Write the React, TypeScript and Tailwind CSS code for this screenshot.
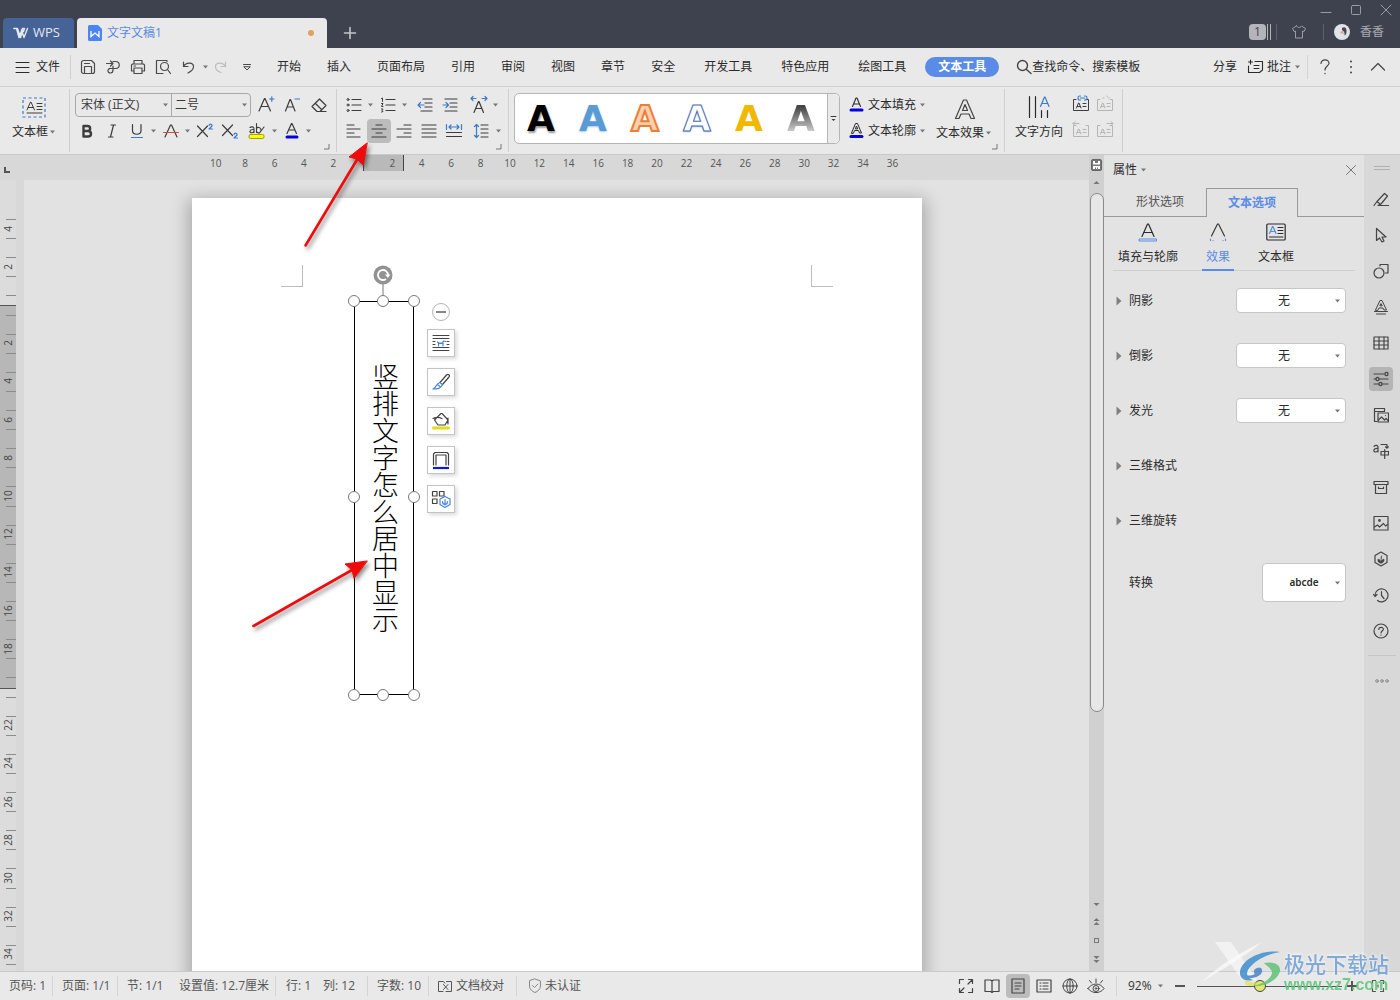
import React from "react";

type P = { children?: React.ReactNode; w?: number; h?: number; className?: string; sw?: number };

/* Line-icon wrapper: one drawing unit equals one pixel. */
function Ic({ children, w = 20, h = 20, className = "", sw = 1.2 }: P) {
  return (
    <svg width={w} height={h} viewBox={`0 0 ${w} ${h}`} fill="none" stroke="currentColor" strokeWidth={sw}
      strokeLinecap="round" strokeLinejoin="round" className={`shrink-0 ${className}`} aria-hidden="true">
      {children}
    </svg>
  );
}

const BLUE = "#3a7bc8";

function Caret({ className = "" }: { className?: string }) {
  return (
    <svg width="9" height="6" viewBox="0 0 9 6" className={`shrink-0 ${className}`} aria-hidden="true">
      <path d="M2 1.5h5L4.5 4.5z" fill="#777" />
    </svg>
  );
}

function Tool({ label, caret, active, className = "w-6", children }: {
  label: string; caret?: boolean; active?: boolean; className?: string; children: React.ReactNode;
}) {
  return (
    <div className="flex items-center">
      <button aria-label={label} className={`flex h-6 items-center justify-center rounded ${active ? "bg-[#bcbcbc]" : ""} ${className}`}>
        {children}
      </button>
      {caret && <Caret />}
    </div>
  );
}

function Corner() {
  return (
    <svg width="6" height="6" viewBox="0 0 6 6" className="absolute right-1.5 bottom-0.5" aria-hidden="true">
      <path d="M5 0v5H0" fill="none" stroke="#777" />
    </svg>
  );
}

function TitleBar() {
  return (
    <header className="flex h-12 shrink-0 justify-between bg-[#3e424f]">
      <div className="flex items-end">
        <button className="ml-[3px] flex h-[30px] w-[71px] items-center gap-1 rounded-t bg-[#466397] pl-2.5 text-[13px] text-[#e4e8f0]">
          <Ic w={16} h={12} sw={1.4}>
            <path d="M.8 1.500h3.700l3 9 2.500-7M3.500 1.500l2.500 9 3.500-9h2l-1 3M8.500 3l2.500 7.500 3.500-9" />
          </Ic>
          WPS
        </button>
        <div className="ml-[3px] flex h-[30px] w-[250px] items-center rounded-t bg-[#e9e9e9] pl-[11px] text-[#5a8ae6]">
          <svg width="14" height="16" viewBox="0 0 14 16" aria-hidden="true">
            <path d="M1.500 0H10l4 4v10.500a1.500 1.500 0 0 1-1.500 1.500h-11A1.500 1.500 0 0 1 0 14.500v-13A1.500 1.500 0 0 1 1.500 0z" fill="#4a85f3" />
            <path d="M3 6v5.500L7 8l4 3.500V6" stroke="#fff" strokeWidth="1.300" fill="none" />
          </svg>
          <span className="ml-[5px]">文字文稿1</span>
          <span className="mr-[13px] ml-auto size-1.5 rounded-full bg-[#e3a15d]" />
        </div>
        <button aria-label="新建标签" className="ml-4 flex h-[30px] items-center text-[#c4c6cc]">
          <Ic w={14} h={14} sw={1.6}><path d="M7 1.5v11M1.5 7h11" /></Ic>
        </button>
      </div>
      <div className="flex flex-col items-end pt-[3px] pr-2 text-[#9a9ca5]">
        <div className="flex h-[13px] gap-[18px]">
          <button aria-label="最小化"><Ic w={12} h={12} sw={1}><path d="M1 8.5h10" /></Ic></button>
          <button aria-label="最大化"><Ic w={12} h={12} sw={1}><rect x="1.5" y="1.5" width="9" height="9" rx="1" /></Ic></button>
          <button aria-label="关闭"><Ic w={12} h={12} sw={1}><path d="M1 1l10 10M11 1L1 11" /></Ic></button>
        </div>
        <div className="mt-2 flex items-center pr-2">
          <span className="flex h-4 w-[17px] items-center justify-center rounded-sm bg-[#b4b5ba] text-[#3e424f]">1</span>
          <svg width="5" height="16" viewBox="0 0 5 16" aria-hidden="true"><path d="M1.500 0v16M4.500 0v16" stroke="#b4b5ba" /></svg>
          <span className="ml-[5px] h-4 w-px bg-[#5d606b]" />
          <button aria-label="皮肤" className="ml-[14px]">
            <Ic w={16} h={16} sw={1}><path d="M5.500 2L1.500 4.500 3 7.500l1.500-.5v7h7V7l1.500.5 1.500-3L10.500 2C9.500 4 6.500 4 5.500 2z" /></Ic>
          </button>
          <span className="ml-4 h-4 w-px bg-[#5d606b]" />
          <svg width="16" height="16" viewBox="0 0 16 16" className="ml-[10px]" aria-hidden="true">
            <circle cx="8" cy="8" r="8" fill="#dfe3ea" />
            <path d="M8 4c2.500-2 5 0 4.500 3.500 0 2-.5 3.500-2 4C11 9 10 7 8 6z" fill="#4b4650" />
            <path d="M6 8.500L8.500 6.500l1.500 4z" fill="#d9a08e" />
          </svg>
          <button className="ml-[10px] leading-4 text-[#a8aab2]">香香</button>
        </div>
      </div>
    </header>
  );
}

const TABS_A = ["开始", "插入", "页面布局", "引用", "审阅", "视图", "章节", "安全"];
const TABS_B = ["开发工具", "特色应用", "绘图工具"];

function MenuBar() {
  return (
    <nav className="flex h-[39px] shrink-0 items-center border-b border-[#d2d2d2] text-[#2b2b2b]">
      <button className="flex items-center gap-1.5 pl-[15px]">
        <Ic w={15} h={12} sw={1}><path d="M1 1.500h13M1 6.500h13M1 11.500h13" /></Ic>文件
      </button>
      <span className="ml-2.5 h-6 w-px bg-[#cfcfcf]" />
      <div className="ml-1 flex items-center text-[#4a4a4a]">
        <Tool label="保存" className="w-[25px]"><Ic w={16} h={16}><path d="M1.500 3.500a2 2 0 0 1 2-2h8l3 3v8a2 2 0 0 1-2 2h-9a2 2 0 0 1-2-2zM4.500 14V7.500h7V14M4.500 4.500h5" /></Ic></Tool>
        <Tool label="输出" className="w-[25px]"><Ic w={16} h={16}><path d="M1.500 4.500h6M5.500 2L8 4.500 5.500 7M8 2.500h2.500c5 0 5 7 0 7H6c-4-.5-4 4.500-.5 4.500 2.500 0 2.500-1.500 2.500-3V7" /></Ic></Tool>
        <Tool label="打印" className="w-[25px]"><Ic w={16} h={16}><path d="M4 5V1.500h8V5M4 12H1.500V6l1-1h11l1 1v6H12M4 9h8v5.500H4zM4 7h1.500" /></Ic></Tool>
        <Tool label="打印预览" className="w-[25px]"><Ic w={16} h={16}><path d="M12 2.500v-1H1.500v13H8" /><circle cx="9.500" cy="7.500" r="4" /><path d="M12.500 10.500l3 4" /></Ic></Tool>
        <Tool label="撤销" caret className="ml-0.5 w-6"><Ic w={14} h={14}><path d="M1.500 2v4.500H6M1.500 6.500c3-5 10-4 10 0 0 3-2.500 5-5.500 6.500" /></Ic></Tool>
        <Tool label="恢复" className="w-5"><Ic w={14} h={14} className="text-[#bdbdbd]"><path d="M12.500 2v4.500H8M12.500 6.500c-3-5-10-4-10 0 0 3 2.500 5 5.500 6" /></Ic></Tool>
        <Tool label="自定义" className="ml-[7px] w-5"><Ic w={10} h={8} sw={1}><path d="M1.500 1.500h7M2 4l3 3 3-3z" /></Ic></Tool>
      </div>
      <div className="ml-5 flex gap-[26px] whitespace-nowrap">
        {TABS_A.map((t) => <button key={t}>{t}</button>)}
      </div>
      <div className="ml-[29px] flex gap-[29px] whitespace-nowrap">
        {TABS_B.map((t) => <button key={t}>{t}</button>)}
      </div>
      <button className="ml-[19px] h-5 rounded-full bg-[#5a8be6] px-[13px] font-bold whitespace-nowrap text-white">文本工具</button>
      <label className="ml-[17px] flex items-center">
        <Ic w={16} h={16} sw={1.4} className="text-[#444]"><circle cx="6.500" cy="6.500" r="5" /><path d="M10.500 10.500l4.500 4" /></Ic>
        <input aria-label="搜索" placeholder="查找命令、搜索模板" className="w-32 bg-transparent outline-none placeholder:text-[#2b2b2b]" />
      </label>
      <div className="ml-auto flex items-center whitespace-nowrap">
        <button>分享</button>
        <button className="ml-2.5 flex items-center gap-[3px]">
          <Ic w={17} h={16} sw={1.1}><path d="M1.500 7v6.500h11l3-2.500V2.500H8M3.500 1v4M1.500 3h4M7 6.500h5M7 9.500h5" /></Ic>批注
        </button>
        <Caret className="ml-0.5" />
        <span className="mr-2 ml-[5px] h-6 w-px bg-[#d4d4d4]" />
        <button aria-label="帮助" className="text-[#444]"><Ic w={18} h={18}><path d="M5 5.500c0-5 8.500-4.500 8 0-.5 2.500-4 3-4 6.500M9 15.300v.4" /></Ic></button>
        <button aria-label="更多" className="ml-2 text-[#444]"><Ic w={18} h={18} sw={2}><path d="M9 3.500v.1M9 9v.1M9 14.500v.1" /></Ic></button>
        <button aria-label="折叠功能区" className="mr-3.5 ml-2.5 text-[#444]"><Ic w={16} h={16}><path d="M1.500 11L8 4.500 14.500 11" /></Ic></button>
      </div>
    </nav>
  );
}

const bars = (ys: [number, number, number][]) => ys.map(([x, x2, y]) => <path key={y} d={`M${x} ${y}H${x2}`} />);

function Ribbon() {
  const sep = "relative flex h-full shrink-0 border-r border-[#d0d0d0]";
  return (
    <section className="flex h-[68px] shrink-0 overflow-hidden border-b border-[#c9c9c9] py-0.5 text-[#3c3c3c]">
      <div className={`${sep} w-[70px] justify-center pt-2`}>
        <button className="flex flex-col items-center gap-[5px]">
          <Ic w={24} h={22}>
            <rect x="1" y="1" width="22" height="19" stroke={BLUE} strokeDasharray="3 2.500" strokeLinecap="butt" />
            <path d="M5 13l3.500-8h.5L12.500 13M6.200 10.500h5M15 6.500h5M15 9.500h5M15 12.500h5M5 16h15" strokeWidth="1" />
          </Ic>
          <span className="flex items-center text-[#2b2b2b]">文本框<Caret /></span>
        </button>
      </div>

      <div className={`${sep} w-[267px] flex-col gap-0.5 pt-1 pl-[5px]`}>
        <div className="flex items-center">
          <div className="mr-px flex h-6 w-44 rounded border border-[#a9a9a9]">
            <label className="relative flex w-24 items-center border-r border-[#a9a9a9]">
              <select aria-label="字体" className="w-full appearance-none bg-transparent pl-[5px] outline-none"><option>宋体 (正文)</option></select>
              <Caret className="absolute right-px" />
            </label>
            <label className="relative flex flex-1 items-center">
              <select aria-label="字号" className="w-full appearance-none bg-transparent pl-[3px] outline-none"><option>二号</option></select>
              <Caret className="absolute right-px" />
            </label>
          </div>
          <Tool label="增大字号" className="w-[27px]"><Ic w={18} h={20}><path d="M2 16L7.500 3.500h.5L13.500 16M4 11.500h7.500" /><path d="M12.500 4h4.500M14.800 1.800v4.500" stroke={BLUE} /></Ic></Tool>
          <Tool label="减小字号" className="w-[27px]"><Ic w={18} h={20}><path d="M1.500 16L6 4.500h.5L11 16M3 12h6.500" /><path d="M11 4h4.500" stroke={BLUE} /></Ic></Tool>
          <Tool label="清除格式" className="w-[26px]"><Ic w={18} h={18}><path d="M2 10.500L9.500 3 16 9.500l-6 6H7zM5.500 7.500l6 6M7 15.500h9" /></Ic></Tool>
        </div>
        <div className="flex items-center gap-px">
          <Tool label="加粗"><Ic w={14} h={14} sw={2.4}><path d="M3.500 2h4c3.500 0 3.500 5 0 5h-4zM3.500 7H8c4 0 4 5.500 0 5.500H3.500z" /></Ic></Tool>
          <Tool label="倾斜"><Ic w={14} h={16}><path d="M6 2h4.500M3.500 14H8M8.500 2L5.500 14" /></Ic></Tool>
          <Tool label="下划线" caret><Ic w={14} h={16}><path d="M2.500 1.500v6c0 5 8.500 5 8.500 0v-6" /><path d="M1.500 14.500h11" stroke={BLUE} /></Ic></Tool>
          <Tool label="删除线" caret><Ic w={18} h={16}><path d="M3 14L8.500 2h1L15 14" /><path d="M1.500 9.500h15" stroke="#d34a4a" /></Ic></Tool>
          <Tool label="上标"><Ic w={18} h={16}><path d="M1.500 3l10 10.500M11.500 3l-10 10.500" /><path d="M13 2.500c.5-2 3.500-1.500 3 .5L13 6h3.500" stroke={BLUE} /></Ic></Tool>
          <Tool label="下标"><Ic w={18} h={16}><path d="M1.500 2l10 10.500M11.500 2l-10 10.500" /><path d="M13 11.500c.5-2 3.500-1.500 3 .5L13 15h3.500" stroke={BLUE} /></Ic></Tool>
          <Tool label="突出显示" caret className="w-[27px]">
            <Ic w={18} h={18}>
              <rect x="1" y="12.500" width="15" height="4" rx="1.500" fill="#ffff00" stroke="#8a8a00" strokeWidth=".8" />
              <path d="M2 5.500c1-1 4-1 4 1v4M6 7.500c-5-.5-5 3.500-2 3.200 1 0 2-.7 2-1.700M8.500 1.500v9M8.500 6.500c1-2 4.500-1 4.500 1.700S9.500 12 8.500 9.500M16 5l-4.500 6" strokeWidth="1.100" />
            </Ic>
          </Tool>
          <Tool label="字体颜色" caret><Ic w={16} h={18}><path d="M3 11.500L7.500 1.500h.5L12.500 11.500M4.500 8h6.500" /><path d="M3 15h10" stroke="#0000e0" strokeWidth="3" /></Ic></Tool>
        </div>
        <Corner />
      </div>

      <div className={`${sep} w-[172px] flex-col gap-0.5 pt-1 pl-[5px]`}>
        <div className="flex items-center gap-px">
          <Tool label="项目符号" caret><Ic w={16} h={16}>{bars([[6, 15, 2.5], [6, 15, 8], [6, 15, 13.5]])}<circle cx="2" cy="2.500" r="1" strokeWidth="1" /><circle cx="2" cy="8" r="1" strokeWidth="1" /><circle cx="2" cy="13.500" r="1" strokeWidth="1" /></Ic></Tool>
          <Tool label="编号" caret><Ic w={16} h={16}>{bars([[6, 15, 2.5], [6, 15, 8], [6, 15, 13.5]])}<path d="M1.500 1.500l1-.5v3.500M1.500 6.500h1.500L1.500 9.500H3M1.500 12H3l-.8 1.500.8 1-1.500.5" strokeWidth="1" /></Ic></Tool>
          <Tool label="减少缩进" className="ml-[3px] w-6"><Ic w={16} h={16}>{bars([[8, 15, 6], [8, 15, 10]])}<path d="M6 2h9M4 14h11" /><path d="M7 8H1M3.500 5.500L1 8l2.500 2.500" stroke={BLUE} /></Ic></Tool>
          <Tool label="增加缩进"><Ic w={16} h={16}>{bars([[8, 15, 6], [8, 15, 10]])}<path d="M3 2h12M3 14h12" /><path d="M1 8h5.500M4 5.500L6.500 8 4 10.500" stroke={BLUE} /></Ic></Tool>
          <Tool label="字符缩放" caret className="ml-1 w-6"><Ic w={18} h={20}><path d="M4 17.500l4.500-11h.5l4.500 11M6 13.500h6" /><path d="M1 3.500h5M3 1.500l-2 2 2 2M17 3.500h-5M15 1.500l2 2-2 2" stroke={BLUE} /></Ic></Tool>
        </div>
        <div className="flex items-center gap-px">
          <Tool label="左对齐"><Ic w={16} h={16}>{bars([[1, 8, 2], [1, 14, 6], [1, 8, 10], [1, 14, 14]])}</Ic></Tool>
          <Tool label="居中对齐" active><Ic w={16} h={16}>{bars([[5, 11, 2], [1, 15, 6], [5, 11, 10], [1, 15, 14]])}</Ic></Tool>
          <Tool label="右对齐"><Ic w={16} h={16}>{bars([[8, 15, 2], [1, 15, 6], [8, 15, 10], [1, 15, 14]])}</Ic></Tool>
          <Tool label="两端对齐"><Ic w={16} h={16}>{bars([[1, 15, 2], [1, 15, 6], [1, 15, 10], [1, 15, 14]])}</Ic></Tool>
          <Tool label="分散对齐"><Ic w={18} h={16}><path d="M1.500 9.500h15M1.500 13.500h15" /><path d="M1.500 1.500v5M16.500 1.500v5M4 4h10M6 2L4 4l2 2M12 2l2 2-2 2" stroke={BLUE} /></Ic></Tool>
          <Tool label="行距" caret className="w-[27px]"><Ic w={16} h={16}>{bars([[8, 15, 2], [8, 15, 6], [8, 15, 10], [8, 15, 14]])}<path d="M3.500 1.500v13M1.500 3.500l2-2 2 2M1.500 12.500l2 2 2-2" stroke={BLUE} /></Ic></Tool>
        </div>
        <Corner />
      </div>

      <div className={`${sep} w-[496px] pt-1 pl-[5px]`}>
        <div className="flex h-[51px] w-[326px] rounded-[5px] border border-[#b5b5b5] bg-white font-['DejaVu_Sans'] text-[36px] leading-[49px] font-bold">
          <button className="w-[52px] text-black [text-shadow:1px_2px_2px_#999]">A</button>
          <button className="w-[52px] text-[#5b9bd5] [text-shadow:0_1px_2px_#a8c8ea]">A</button>
          <button className="w-[52px] text-[#fbd0b0] [-webkit-text-stroke:2px_#ed7d31]">A</button>
          <button className="w-[52px] text-white [-webkit-text-stroke:1px_#4a6cb0] [text-shadow:0_1px_2px_#9db6e0]">A</button>
          <button className="w-[52px] text-[#f2b800]">A</button>
          <button className="w-[52px] bg-linear-to-b from-[#444] from-25% to-[#c8c8c8] to-75% bg-clip-text text-transparent">A</button>
          <button aria-label="更多样式" className="flex flex-1 items-center justify-center rounded-r-[5px] border-l border-[#b5b5b5] bg-[#eaeaea]">
            <Ic w={7} h={8} sw={1}><path d="M1 1.500h5" /><path d="M1.500 4h4l-2 2z" fill="currentColor" stroke="none" /></Ic>
          </button>
        </div>
        <div className="ml-2 flex flex-col gap-0.5 text-[#2b2b2b]">
          <button className="flex h-6 items-center">
            <Ic w={17} h={18}><path d="M4.500 10.500L8 2h1l3.500 8.500M5.500 8h6" strokeWidth="1.100" /><path d="M3 14h11" stroke="#0000e0" strokeWidth="3" /></Ic>
            <span className="ml-[3px]">文本填充</span><Caret className="ml-0.5" />
          </button>
          <button className="flex h-6 items-center">
            <Ic w={17} h={18}><path d="M3.500 11L7.500 1.500h2L13.500 11h-2l-1-2.500h-4L5.500 11zM7.500 6.500l1-2.500 1 2.500z" strokeWidth="1" /><path d="M3 14.500h11" stroke="#0000e0" strokeWidth="3" /></Ic>
            <span className="ml-[3px]">文本轮廓</span><Caret className="ml-0.5" />
          </button>
        </div>
        <button className="ml-[9px] flex flex-col items-center gap-[5px] self-start pt-[5px] text-[#2b2b2b]">
          <Ic w={22} h={22} className="text-[#444]"><path d="M1.500 20.500L9.500 2h3L20.500 20.500h-3.500L15 16H7l-2 4.500zM8.500 12.500L11 6.500l2.500 6z" /></Ic>
          <span className="flex items-center">文本效果<Caret /></span>
        </button>
        <Corner />
      </div>

      <div className={`${sep} w-[118px] pt-1.5 pl-2.5`}>
        <button className="flex flex-col items-center gap-[5px] self-start text-[#2b2b2b]">
          <Ic w={24} h={24}><path d="M2.500 1.500v21M8.500 1.500v21M14.500 15.500v7M20.500 15.500v7" /><path d="M13.500 11.500L17.500 2h.5l4 9.500M15 8.500h6" stroke={BLUE} /></Ic>
          文字方向
        </button>
        <div className="ml-[9px] grid grid-cols-2 content-start gap-x-1.5 gap-y-2">
          {["创建链接", "断开链接", "上一文本框", "下一文本框"].map((t, i) => (
            <button key={t} aria-label={t} className={i ? "text-[#b5b5b5]" : ""}>
              <Ic w={18} h={18}>
                <path d="M4 4.500H1.500v11h15v-11H14M4.500 13l2-5h.5l2 5M5.200 11.500h3M11 8.500h3M11 11.500h3" strokeWidth="1" />
                {i === 0 && <path d="M8.500 1h-1c-2 0-2 4 0 4h1M12.500 1h1c2 0 2 4 0 4h-1M8.500 3h4" stroke={BLUE} />}
                {i === 1 && <path d="M7 3h1M11 1l.5 1M13.500 2.500l-.8.8" strokeWidth="1" />}
                {i === 2 && <path d="M7 2.500H1M3 .5l-2 2 2 2" strokeWidth="1" />}
                {i === 3 && <path d="M11 2.500h6M15 .5l2 2-2 2" strokeWidth="1" />}
              </Ic>
            </button>
          ))}
        </div>
      </div>
    </section>
  );
}

const H_MARKS = ["10", "8", "6", "4", "2", "", "2", "4", "6", "8", "10", "12", "14", "16", "18", "20", "22", "24", "26", "28", "30", "32", "34", "36"];
const V_MARKS = ["4", "2", "", "2", "4", "6", "8", "10", "12", "14", "16", "18", "", "22", "24", "26", "28", "30", "32", "34"];

const FLOATING: [string, React.ReactNode][] = [
  ["布局选项", <><path d="M2 2.500h16M2 5.500h16M2 8.500h2M16 8.500h2M2 11.500h2M16 11.500h2M2 14.500h16M2 17.500h16" strokeWidth="1" /><path d="M6.500 9l1 1h4l1-2 2 .5M7.500 10v3M12 10v3M7.500 10.500h4.500" stroke="#4a86d8" /></>],
  ["形状样式", <><path d="M9 10.500l6.500-7.500c1.500-1.500 4 0 2.500 2L11.500 12.500" /><path d="M9 10.500l2.500 2.200c-2 4-5 4.300-9.500 4.300 3-1 3-5.500 7-6.500zM6.500 12.500l2.500 2" stroke="#4a86d8" /></>],
  ["形状填充", <><path d="M3.500 9L10 2.500h1L17 9l-3 5H7zM2 7.500c4-2 7-1 9 0M17 7v6" /><path d="M2.500 17h15" stroke="#dede1c" strokeWidth="3" /></>],
  ["形状轮廓", <><path d="M2.500 15V4l1.500-1.500h12L17.500 4v11M5 15V5h10v10" /><path d="M2 18h16" stroke="#1414e6" strokeWidth="2.200" strokeLinecap="butt" /></>],
  ["更多设置", <><rect x="1.500" y="2.500" width="4.500" height="4.500" /><rect x="8.500" y="2.500" width="4.500" height="4.500" /><rect x="1.500" y="10" width="4.500" height="4.500" /><path d="M14 7.500l5 2.500v5.500L14 18.500 9 15.500V10z" stroke="#4a86d8" fill="#fff" /><path d="M14 16V10.500M14 15.500c-2 0-2.500-1.500-2.500-3M14 15.500c2 0 2.500-1.500 2.500-3" stroke="#4a86d8" /></>],
];

function Handle({ className }: { className: string }) {
  return <span className={`absolute size-3 rounded-full border border-[#777] bg-white ${className}`} />;
}

function Page() {
  return (
    <div className="relative mx-auto mt-[18px] h-[1032px] w-[730px] bg-white shadow-[0_5px_16px_4px_rgba(0,0,0,0.25)]">
      <span className="absolute top-[67px] left-[89px] size-[22px] border-r border-b border-[#bdbdbd]" />
      <span className="absolute top-[67px] left-[619px] size-[22px] border-b border-l border-[#bdbdbd]" />
      <div className="absolute top-[103px] left-[162px] flex h-[394px] w-[60px] items-center justify-center border border-black">
        <p className="ml-0.5 text-[27px] leading-[27px] font-light text-black [writing-mode:vertical-rl]">竖排文字怎么居中显示</p>
        <Handle className="-top-[7px] -left-[7px]" />
        <Handle className="-top-[7px] left-[22px]" />
        <Handle className="-top-[7px] -right-[7px]" />
        <Handle className="top-[189px] -left-[7px]" />
        <Handle className="top-[189px] -right-[7px]" />
        <Handle className="-bottom-[7px] -left-[7px]" />
        <Handle className="-bottom-[7px] left-[22px]" />
        <Handle className="-right-[7px] -bottom-[7px]" />
        <svg width="20" height="30" viewBox="0 0 20 30" className="absolute -top-[37px] left-[18px]" aria-hidden="true">
          <path d="M10 18v12" stroke="#777" />
          <circle cx="10" cy="10" r="9.500" fill="#929292" />
          <path d="M13 14a5 5 0 1 1 2-4" fill="none" stroke="#fff" strokeWidth="1.800" />
          <path d="M12 9.500h5.500l-2.700 3.500z" fill="#fff" />
        </svg>
      </div>
      <div className="absolute top-[105px] left-[235px] flex flex-col items-center gap-[11px]">
        <button aria-label="收起" className="-mb-[3px] flex size-[18px] items-center justify-center rounded-full border border-[#b5b5b5] bg-white">
          <span className="h-0.5 w-2.5 bg-[#888]" />
        </button>
        {FLOATING.map(([t, d]) => (
          <button key={t} aria-label={t} className="flex size-7 items-center justify-center border border-[#c4c4c4] bg-white text-[#444] shadow-[2px_2px_4px_rgba(0,0,0,0.15)]">
            <Ic>{d}</Ic>
          </button>
        ))}
      </div>
    </div>
  );
}

function Workspace() {
  return (
    <main className="flex min-w-0 flex-1 bg-[#d8d8d8]">
      <div className="flex min-w-0 flex-1 flex-col">
        <div className="relative h-[25px] shrink-0 text-[10px] text-[#555]">
          <svg width="6" height="6" viewBox="0 0 6 6" className="absolute top-3 left-1" aria-hidden="true"><path d="M1 0v5h5" fill="none" stroke="#555" strokeWidth="2" /></svg>
          <span className="absolute top-0 left-[363px] h-4 w-[41px] border-x border-[#444] bg-[#b9b9b9]" />
          <div className="relative ml-[201px] flex w-[706px]">
            {H_MARKS.map((m, i) => <span key={i} className="flex-1 text-center leading-4">{m}</span>)}
          </div>
        </div>
        <div className="flex min-h-0 flex-1">
          <div className="relative w-6 shrink-0 overflow-hidden text-[10px] text-[#444]">
            <span className="absolute inset-y-0 left-0 w-4 bg-[#dcdcdc]" />
            <span className="absolute top-[125px] left-0 h-[384px] w-4 border-y border-[#555] bg-[#b7b7b7]" />
            <div className="relative mt-[39px] flex h-[764px] w-4 flex-col">
              {V_MARKS.map((m, i) => (
                <div key={i} className="relative flex flex-1 flex-col">
                  <div className="flex h-1/2 items-center justify-center">
                    <span className="-rotate-90 leading-4">{m}</span>
                  </div>
                  <span className="absolute top-0 right-0 h-px w-2.5 bg-[#8c8c8c]" />
                  <span className="absolute top-1/2 right-0 h-px w-2.5 bg-[#8c8c8c]" />
                </div>
              ))}
            </div>
          </div>
          <div className="min-w-0 flex-1 overflow-hidden bg-[#e2e2e2]"><Page /></div>
        </div>
      </div>
      <div className="flex w-[15px] shrink-0 flex-col items-center bg-[#d0d0d0] pt-1 text-[#666]">
        <svg width="11" height="12" viewBox="0 0 11 12" aria-hidden="true">
          <rect x=".5" y=".5" width="10" height="11" rx="1.500" fill="#777" stroke="#666" />
          <path d="M2 2h2v2h3V2h2v3.500H2zM2 7h7v3H7V8.500H6V10H5V8.500H4V10H2z" fill="#fff" />
        </svg>
        <svg width="7" height="5" viewBox="0 0 7 5" className="mt-[9px]" aria-hidden="true"><path d="M.5 4h6l-3-3z" fill="#777" /></svg>
        <span className="mt-2 h-[519px] w-3.5 rounded-full border border-[#8a8a8a] bg-[#e7e7e7]" />
        <div className="mt-auto mb-[7px] flex flex-col items-center gap-2.5">
          <svg width="7" height="5" viewBox="0 0 7 5" aria-hidden="true"><path d="M.5 1h6l-3 3z" fill="#777" /></svg>
          <svg width="7" height="9" viewBox="0 0 7 9" aria-hidden="true"><path d="M.5 4h6l-3-3zM.5 8h6l-3-3z" fill="#777" /></svg>
          <svg width="7" height="9" viewBox="0 0 7 9" aria-hidden="true"><rect x="1.500" y="2.500" width="4" height="4" fill="none" stroke="#777" /></svg>
          <svg width="7" height="9" viewBox="0 0 7 9" aria-hidden="true"><path d="M.5 1h6l-3 3zM.5 5h6l-3 3z" fill="#777" /></svg>
        </div>
      </div>
    </main>
  );
}

function Field({ label, select }: { label: string; select?: boolean }) {
  return (
    <div className="flex h-[55px] items-center pr-[18px] pl-3">
      <svg width="6" height="10" viewBox="0 0 6 10" aria-hidden="true"><path d="M.5.5L5.500 5l-5 4.500z" fill="#808080" /></svg>
      <span className="ml-[7px]">{label}</span>
      {select && (
        <label className="relative ml-auto flex h-[25px] w-[110px] items-center rounded border border-[#c6c6c6] bg-white">
          <select aria-label={label} className="w-full appearance-none bg-transparent pr-3.5 [text-align-last:center] outline-none"><option>无</option></select>
          <Caret className="absolute right-[3px]" />
        </label>
      )}
    </div>
  );
}

function Properties() {
  return (
    <aside className="flex w-[260px] shrink-0 flex-col bg-[#e3e3e3] text-[#2b2b2b]">
      <div className="flex h-[33px] shrink-0 items-center justify-between pr-[7px] pb-[3px] pl-[9px]">
        <button className="flex items-center gap-0.5">属性<Caret /></button>
        <button aria-label="关闭面板"><Ic w={12} h={12} sw={1} className="text-[#777]"><path d="M1.500 1.500l9 9M10.500 1.500l-9 9" /></Ic></button>
      </div>
      <div className="flex h-[29px] shrink-0" role="tablist">
        <button role="tab" className="w-[102px] border-b border-[#999] pl-2.5 text-[#555]">形状选项</button>
        <button role="tab" className="w-[92px] border border-b-0 border-[#999] font-bold text-[#5a8be6]">文本选项</button>
        <span className="flex-1 border-b border-[#999]" />
      </div>
      <div className="relative mx-[9px] flex h-[54px] shrink-0 border-b border-[#cfcfcf] pt-1">
        <button className="flex w-[70px] flex-col items-center gap-1.5">
          <Ic w={20} h={22}><path d="M4 15.500L9.500 3h1L16 15.500M5.500 11.500h9" /><path d="M1.500 18h17v2h-17z" stroke="#5a8be6" strokeWidth="1" /></Ic>填充与轮廓
        </button>
        <button className="-mb-px ml-[19px] flex w-8 flex-col items-center gap-1.5 border-b-2 border-[#5a8be6] text-[#5a8be6]">
          <Ic w={20} h={22}><path d="M3.500 15L9.500 3h1L16.500 15" stroke="#3c3c3c" /><path d="M2.500 18v1.500M5 19.500v.1M15 19.500v.1M17.500 18v1.500" /></Ic>效果
        </button>
        <button className="ml-6 flex w-9 flex-col items-center gap-1.5 whitespace-nowrap">
          <Ic w={20} h={22}><rect x=".8" y="3" width="18.400" height="16" rx="1" /><path d="M12 6.500h5M12 9.500h5M12 12.500h5M3.500 16h13.500" strokeWidth="1" /><path d="M3.500 12.500L6.500 5.500h.5l3 7M4.500 10.500h4.500" stroke="#5a8be6" /></Ic>文本框
        </button>
      </div>
      <div className="mt-0.5">
        <Field label="阴影" select />
        <Field label="倒影" select />
        <Field label="发光" select />
        <Field label="三维格式" />
        <Field label="三维旋转" />
      </div>
      <div className="mt-[15px] flex items-center justify-between pr-[18px] pl-[25px]">
        <span>转换</span>
        <button className="relative flex h-[39px] w-[84px] items-center justify-center rounded border border-[#c6c6c6] bg-white font-['Noto_Sans'] text-[10px] font-semibold">
          abcde<Caret className="absolute right-[3px]" />
        </button>
      </div>
    </aside>
  );
}

const SIDE: [string, React.ReactNode][] = [
  ["批注笔", <><path d="M1 14.500l3-4L11.500 2.500l3 2.500L8 13l-3 1.500H15.500M4 10.500L7.500 13.500" /></>],
  ["选择", <><path d="M3.500 1.500v12l3-2.500 2.500 4 2-1-2-4h4z" /></>],
  ["形状", <><circle cx="6" cy="10" r="5" /><path d="M7 3V1.500h8V10h-2.500" /></>],
  ["艺术字", <><path d="M2.500 11L7 1.500h2L13.500 11h-2.500l-1-2H6l-1 2zM7 6.500l1-2 1 2zM1.500 12.500h13M3.500 15h9" strokeWidth="1" /></>],
  ["表格", <><rect x="1" y="2" width="14" height="12" /><path d="M1 6h14M1 10h14M6 2v12M11 2v12" /></>],
  ["属性", <><path d="M1 3h10M1 8h2M6 8h9M1 13h5M9 13h6" /><circle cx="13.500" cy="3" r="1.600" /><circle cx="4.500" cy="8" r="1.600" /><circle cx="7.500" cy="13" r="1.600" /></>],
  ["图库", <><path d="M4 14.500H1.500v-13h10V4M1.500 4.500h10" /><rect x="5" y="6" width="10.500" height="9" /><path d="M5.500 13l3-3 3 3 1.500-1.500 2 2M12.500 8.500v.1" /></>],
  ["翻译", <><path d="M1 3.500c1-1.500 4-1.500 4 .5v5M5 5.500c-5-.5-5 3.500-2.500 3.500C4 9 5 8 5 7M8 1.500h6V5M12.500 3.800L14 5.200l1.300-1.400M8 8.500h7.500V12H8zM11.700 6.500v9" /></>],
  ["素材库", <><path d="M1 2.500h14v3H1zM2.500 5.500v9h11v-9M5.500 8v1.500h5V8" /></>],
  ["图片", <><rect x="1" y="1.500" width="14" height="13.500" /><path d="M1.500 12l3-2 2 2 4-3.500 2 2.500 2-1.500" /><circle cx="6.500" cy="5.500" r=".8" /></>],
  ["推荐", <><path d="M8 1l6 3.500v7L8 15l-6-3.500v-7z" /><path d="M8 12V6.500c0-1.500 1-2 1-2M8 12c-3 0-3.500-2-3-4 2 .5 3 2 3 4 2.500 0 3.500-2 3-4-2 .5-3 2-3 4z" fill="currentColor" strokeWidth=".5" /></>],
  ["历史", <><path d="M2 8.500a6.500 6.500 0 1 1 2.500 5M.5 7.500L2 9.500l2-2M8.500 4.500v4l2.500 3" /></>],
  ["帮助中心", <><circle cx="8" cy="8" r="7" /><path d="M5.800 6.500c0-3 4.800-2.800 4.500 0-.3 1.500-2.300 1.800-2.300 3.500M8 12v.2" /></>],
];

function SideBar() {
  return (
    <aside className="flex w-9 shrink-0 flex-col items-center bg-[#d8d8d8] pt-2.5 text-[#444]">
      <svg width="18" height="6" viewBox="0 0 18 6" aria-hidden="true"><path d="M1 1.500h16M1 4.500h16" stroke="#b0b0b0" /></svg>
      <div className="mt-4 mr-0.5 flex flex-col gap-3">
        {SIDE.map(([t, d]) => (
          <button key={t} aria-label={t} className={`flex size-6 items-center justify-center rounded ${t === "属性" ? "bg-[#b4b4b4]" : ""}`}>
            <Ic w={16} h={16}>{d}</Ic>
          </button>
        ))}
      </div>
      <span className="mt-3 h-px w-7 bg-[#c6c6c6]" />
      <button aria-label="更多工具" className="mt-[21px]">
        <Ic w={14} h={8} sw={1} className="text-[#888]"><circle cx="2" cy="4" r="1.300" /><circle cx="7" cy="4" r="1.300" /><circle cx="12" cy="4" r="1.300" /></Ic>
      </button>
    </aside>
  );
}

function StatusBar() {
  const bar = <span className="h-5 w-px bg-[#d4d4d4]" />;
  return (
    <footer className="flex h-[29px] shrink-0 items-center border-t border-[#c9c9c9] whitespace-nowrap text-[#555]">
      <span className="w-[52px] pl-[9px]">页码: 1</span>{bar}
      <span className="w-16 pl-[9px]">页面: 1/1</span>{bar}
      <span className="w-[61px] pl-[9px]">节: 1/1</span>
      <span className="w-24">设置值: 12.7厘米</span>{bar}
      <span className="w-[47px] pl-2.5">行: 1</span>
      <span className="w-[44px]">列: 12</span>{bar}
      <span className="w-[60px] pl-[9px]">字数: 10</span>{bar}
      <button className="flex w-[87px] items-center gap-[3px] pl-2">
        <Ic w={16} h={14} sw={1}><path d="M6 12.500H1.500v-10H6L8 4M9.500 2.500h5v10H9M6.500 5.500l4.500 5M11 5.500l-4.500 5" /></Ic>文档校对
      </button>{bar}
      <button className="flex items-center gap-[3px] pl-[11px]">
        <Ic w={14} h={16} sw={1} className="text-[#888]"><path d="M7 1l5.500 2v5c0 3.500-3 5.500-5.500 6.500C4.500 13.500 1.500 11.500 1.500 8V3zM4.500 7.500l2 2 3.500-3.500" /></Ic>未认证
      </button>
      <div className="ml-auto flex items-center gap-0.5 text-[#444]">
        <Tool label="全屏显示"><Ic w={16} h={16}><path d="M1.500 5.500v-4h4M10.500 1.500h4v4M14.500 10.500v4h-4M5.500 14.500h-4v-4M10 6l4-4M6 10l-4 4" /></Ic></Tool>
        <Tool label="阅读版式"><Ic w={16} h={16}><path d="M8 2.500v12M1 2h5.500L8 3l1.500-1H15v11.500H9.500L8 14.500l-1.500-1H1z" /></Ic></Tool>
        <Tool label="页面视图" active><Ic w={16} h={16}><path d="M2 1h12v14H2zM5 5h6M5 8h6M5 11h4" /></Ic></Tool>
        <Tool label="大纲视图"><Ic w={16} h={16}><path d="M1 2h14v12H1zM4 5h1M4 8h1M4 11h1M7 5h5M7 8h5M7 11h5" /></Ic></Tool>
        <Tool label="网页版式"><Ic w={16} h={16} sw={1}><circle cx="8" cy="8" r="7" /><ellipse cx="8" cy="8" rx="3.200" ry="7" /><path d="M1 8h14M8 1v14" /></Ic></Tool>
        <Tool label="护眼模式"><Ic w={18} h={18} sw={1}><path d="M1 11.500c4-6 12-6 16 0-4 5.500-12 5.500-16 0zM9 5.500V2M4.500 6L2.500 3.500M13.500 6l2-2.500" /><circle cx="9" cy="11.500" r="3" /><circle cx="9" cy="11.500" r=".8" /></Ic></Tool>
      </div>
      <span className="ml-2 h-5 w-px bg-[#d4d4d4]" />
      <button className="ml-[11px] flex w-[37px] items-center justify-between text-[#333]">92%<Caret /></button>
      <button aria-label="缩小" className="ml-[9px]"><Ic w={12} h={12} sw={2}><path d="M1 6h10" strokeLinecap="butt" /></Ic></button>
      <input type="range" aria-label="显示比例" min={0} max={145} defaultValue={62}
        className="ml-[11px] h-4 w-[145px] appearance-none bg-transparent [&::-webkit-slider-runnable-track]:h-px [&::-webkit-slider-runnable-track]:bg-[#555] [&::-webkit-slider-thumb]:-mt-1.5 [&::-webkit-slider-thumb]:size-3 [&::-webkit-slider-thumb]:appearance-none [&::-webkit-slider-thumb]:rounded-full [&::-webkit-slider-thumb]:border [&::-webkit-slider-thumb]:border-[#444] [&::-webkit-slider-thumb]:bg-[#e4e870]" />
      <button aria-label="放大" className="ml-1"><Ic w={12} h={12} sw={2}><path d="M1 6h10M6 1v10" strokeLinecap="butt" /></Ic></button>
      <button aria-label="适应窗口" className="mr-[15px] ml-[13px]"><Ic w={14} h={14}><path d="M1.500 4.500v-3h3M9.500 1.500h3v3M12.500 9.500v3h-3M4.500 12.500h-3v-3M7 6v2" /></Ic></button>
    </footer>
  );
}

function Watermark() {
  return (
    <div className="pointer-events-none absolute right-[11px] bottom-1.5 flex items-end opacity-85">
      <svg width="82" height="52" viewBox="0 -6 82 52" aria-hidden="true">
        <path d="M13-6h16l26 38H40z" fill="#fff" opacity=".6" />
        <path d="M60-6C40 4 18 16 0 34 22 20 44 8 60-6z" fill="#fff" opacity=".75" />
        <path d="M78 4C58 1 38 13 38 25c0 6 6 9 13 7-7-2-8-8-2-14C56 11 66 6 78 4z" fill="#3f8fcf" />
        <path d="M42 26c2 6 12 5 17 0 3-4 0-8-4-6-3 1-4 4-2 6-4 2-8 2-11 0z" fill="#4a83c6" />
        <path d="M62 15c10-2 17 2 16 8-2 10-18 17-30 15 12-1 21-7 22-13 0-4-4-6-8-10z" fill="#62c27a" />
        <path d="M48 38c-6-1-6-4-4-6 4 3 12 3 16 1-3 3-7 5-12 5z" fill="#e2e04a" opacity=".8" />
      </svg>
      <div className="flex flex-col">
        <span className="text-[21px] leading-6 font-medium text-[#6f9fd6] [text-shadow:0_-1px_3px_#fff]">极光下载站</span>
        <span className="font-['Liberation_Sans'] text-[16px] leading-[18px] font-bold text-[#5fc47a]">www.xz7.com</span>
      </div>
    </div>
  );
}

function Arrows() {
  return (
    <svg className="pointer-events-none absolute inset-0 size-full [filter:drop-shadow(2px_3px_2px_rgba(0,0,0,0.45))]" aria-hidden="true">
      <g fill="#f00b0b" stroke="#f00b0b" strokeLinecap="round">
        <path d="M305.500 245.500L358 158" strokeWidth="2.600" />
        <path d="M367 143l-18 14 8 2 6 6z" strokeWidth="1" />
        <path d="M253.500 626L352 570" strokeWidth="2.600" />
        <path d="M367 561l-22 3 7 6 2 8z" strokeWidth="1" />
      </g>
    </svg>
  );
}

export default function App() {
  return (
    <div className="relative flex h-screen flex-col overflow-hidden bg-[#e9e9e9] font-['Open_Sans','Noto_Sans_CJK_SC',sans-serif] text-xs">
      <TitleBar />
      <MenuBar />
      <Ribbon />
      <div className="flex min-h-0 flex-1">
        <Workspace />
        <Properties />
        <SideBar />
      </div>
      <StatusBar />
      <Arrows />
      <Watermark />
    </div>
  );
}
